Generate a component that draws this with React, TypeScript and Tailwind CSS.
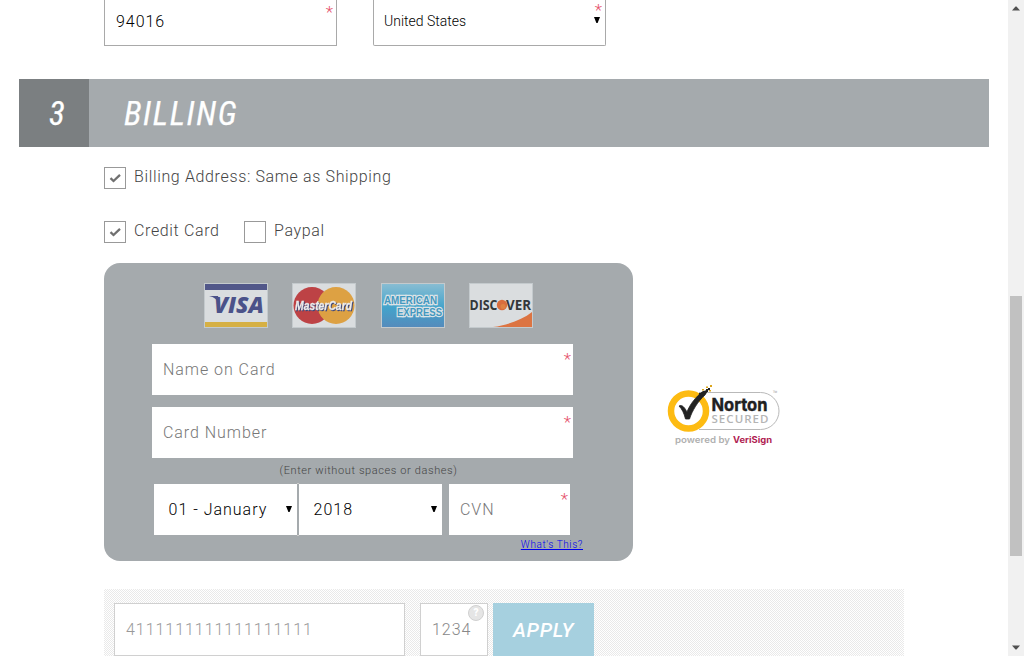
import type { ReactNode } from 'react';

function Star({ className }: { className: string }) {
  return <span className={`absolute text-[17px] leading-none font-light text-[#e5506a] ${className}`}>*</span>;
}

function Caret() {
  return (
    <svg width="6" height="6" viewBox="0 0 6 6" className="mb-[2px] shrink-0">
      <path d="M0 0H6L3.6 6H2.4Z" fill="#000" />
    </svg>
  );
}

function Check({ label, checked, className }: { label: string; checked?: boolean; className?: string }) {
  return (
    <label className={`flex items-start gap-2 ${className ?? ''}`}>
      <span className="flex size-[22px] items-center justify-center border border-[#999] bg-white">
        {checked && (
          <svg width="12" height="10" viewBox="0 0 12 10">
            <path d="M1.500 5.200L4.500 8L11 1.800" fill="none" stroke="#707070" strokeWidth="2.3" />
          </svg>
        )}
      </span>
      <span className="text-base leading-[19px] tracking-[0.64px] whitespace-nowrap text-[#444]">{label}</span>
    </label>
  );
}

function CardFrame({ children }: { children: ReactNode }) {
  return (
    <svg width="64" height="45" viewBox="0 0 64 45" fontFamily="Open Sans, sans-serif">
      <rect width="64" height="45" fill="#dadddf" />
      {children}
      <rect x="0.5" y="0.5" width="63" height="44" fill="none" stroke="#c4cacd" />
    </svg>
  );
}

function Cards() {
  return (
    <div className="ml-[100px] grid grid-cols-[88px_89px_88px_64px]">
      <CardFrame>
        <rect x="1" y="1" width="62" height="6" fill="#515789" />
        <rect x="1" y="39" width="62" height="5" fill="#d6b044" />
        <text x="10" y="29.5" fontSize="23" fontWeight="800" fontStyle="italic" fill="#4b5289" textLength="50" lengthAdjust="spacingAndGlyphs">VISA</text>
        <path d="M5 13H14L16 21C14 17 10 14 5 13Z" fill="#4b5289" />
      </CardFrame>
      <CardFrame>
        <circle cx="20" cy="22.5" r="18.5" fill="#bd4245" />
        <circle cx="44" cy="22.5" r="18.5" fill="#dda143" />
        <path d="M31 11.5H35M29 14.5H37M28 17.5H38" stroke="#dda143" strokeWidth="1.3" />
        <path d="M27 29.500H37M29 32.500H37" stroke="#dda143" strokeWidth="1.3" />
        <text x="3" y="27" fontSize="12.500" fontWeight="700" fontStyle="italic" fontFamily="Liberation Sans, sans-serif" fill="#ececec" stroke="#ececec" strokeWidth="0.3" textLength="57" lengthAdjust="spacingAndGlyphs" className="drop-shadow-[1px_1px_0_#404878]">MasterCard</text>
      </CardFrame>
      <CardFrame>
        <defs>
          <linearGradient id="amex" x1="0" y1="0" x2="0" y2="1">
            <stop offset="0" stopColor="#8bbed3" />
            <stop offset="0.55" stopColor="#43a3cb" />
            <stop offset="1" stopColor="#568abb" />
          </linearGradient>
        </defs>
        <rect width="64" height="45" fill="url(#amex)" />
        <g fontSize="10.500" fontWeight="700" fontFamily="Liberation Sans, sans-serif" fill="#4398bf" stroke="#dce3e6" strokeWidth="2.4" paintOrder="stroke">
          <text x="3" y="21" textLength="53" lengthAdjust="spacingAndGlyphs">AMERICAN</text>
          <text x="16" y="32.500" textLength="45" lengthAdjust="spacingAndGlyphs">EXPRESS</text>
        </g>
      </CardFrame>
      <CardFrame>
        <path d="M24 44C38 42 53 37 63 29V44Z" fill="#dc7442" />
        <g fontSize="13.5" fontWeight="700" fill="#34383a">
          <text x="0.5" y="27" textLength="28" lengthAdjust="spacingAndGlyphs">DISC</text>
          <text x="37" y="27" textLength="25" lengthAdjust="spacingAndGlyphs">VER</text>
        </g>
        <circle cx="33" cy="22" r="5.2" fill="#d96d3d" />
        <circle cx="34" cy="23.5" r="2.5" fill="#e39147" opacity="0.6" />
      </CardFrame>
    </div>
  );
}

function Norton() {
  return (
    <svg width="114" height="64" viewBox="0 0 114 64" className="mt-[120px] ml-[34px] shrink-0" fontFamily="Open Sans, sans-serif">
      <path d="M32 9.500H93.500A18.500 18.500 0 0 1 93.500 46.500H32" fill="#fff" stroke="#b9b9b9" />
      <circle cx="21.500" cy="28" r="17.500" fill="#fff" stroke="#fdbb12" strokeWidth="6.500" />
      <path d="M12 23C15 21 18 25 20 29C23 21 29 14 35 9L41 7L38 12C31 18 25 28 22.500 36H18.500C17 30 15 26 12 23Z" fill="#222" stroke="#222" strokeWidth="0.8" />
      <path d="M36 8h3v-2h2v3h-2v2h-2v2h-2zM41 5h2v2h-2zM32 10h2v2h-2z" fill="#222" />
      <path d="M39 3.500h2v1.500h-2zM43 2h2v2h-2zM42 7h2v1.500h-2zM35 6h2v1.500h-2z" fill="#dca51b" />
      <text x="44.500" y="27.500" fontSize="18" fontWeight="700" fontFamily="Inter, sans-serif" fill="#202020" stroke="#202020" strokeWidth="0.4" textLength="56" lengthAdjust="spacingAndGlyphs">Norton</text>
      <text x="44.500" y="40" fontSize="11.500" fontWeight="600" fill="#b4b4b4" textLength="57" lengthAdjust="spacing">SECURED</text>
      <text x="106" y="12" fontSize="6" fill="#888">™</text>
      <g fontSize="9" fontWeight="600" fontFamily="Inter, sans-serif">
        <text x="8" y="60" fill="#b0b0b0" textLength="55" lengthAdjust="spacingAndGlyphs">powered by</text>
        <text x="66" y="60" fontWeight="700" fill="#b01c52" textLength="39" lengthAdjust="spacingAndGlyphs">VeriSign</text>
      </g>
    </svg>
  );
}

function Field({ label, className }: { label: string; className: string }) {
  return (
    <div className={`relative h-[51px] bg-white pl-[11px] leading-[51px] tracking-[0.95px] text-[#777] ${className}`}>
      {label}
      <Star className="top-[7px] right-[1px]" />
    </div>
  );
}

function Select({ value }: { value: string }) {
  return (
    <div className="flex h-[51px] w-[143px] items-center justify-between bg-white pr-[5px] pl-[14.5px] tracking-[1px] text-black">
      {value}
      <Caret />
    </div>
  );
}

export default function App() {
  return (
    <div className="flex h-[656px] w-[1024px] overflow-hidden bg-white font-[Roboto,sans-serif] text-base font-light text-black">
      <main className="flex h-[656px] w-[1008px] flex-col overflow-hidden">
        <div className="ml-[104px] flex h-[46px] shrink-0 gap-9">
          <div className="relative w-[233px] border-x border-b border-[#a9a9a9] pl-[11px] leading-[43px] tracking-[0.95px]">
            94016
            <Star className="top-[4px] right-[2px]" />
          </div>
          <div className="relative flex w-[233px] items-center justify-between rounded-b-[2px] border-x border-b border-[#a9a9a9] pr-[5px] pb-[3px] pl-[10px] text-sm">
            United States
            <Caret />
            <Star className="top-[2px] right-[3px]" />
          </div>
        </div>

        <header className="mt-[33px] ml-[19px] flex h-[68px] w-[970px] shrink-0 bg-[#a5aaad] font-['Roboto_Condensed',Roboto,sans-serif] text-[33px] leading-[69px] font-normal text-white italic [-webkit-text-stroke:0.25px_white]">
          <div className="w-[70px] bg-[#7b7f81] pl-[30px]">3</div>
          <h2 className="pl-[35px] tracking-[1.65px]">BILLING</h2>
        </header>

        <div className="mt-5 ml-[104px] flex shrink-0">
          <Check label="Billing Address: Same as Shipping" checked />
        </div>
        <div className="mt-8 ml-[104px] flex shrink-0">
          <Check label="Credit Card" checked className="w-[140px]" />
          <Check label="Paypal" />
        </div>

        <div className="mt-5 ml-[104px] flex shrink-0">
          <section className="h-[298px] w-[529px] rounded-2xl bg-[#a5aaad] pt-5">
            <Cards />
            <div className="mt-4 ml-12 flex flex-col gap-3">
              <Field label="Name on Card" className="w-[421px]" />
              <Field label="Card Number" className="w-[421px]" />
            </div>
            <p className="h-[26px] text-center text-[11px] leading-[25px] tracking-[0.61px] text-[#444]">(Enter without spaces or dashes)</p>
            <div className="ml-[50px] flex">
              <Select value="01 - January" />
              <div className="my-[-1px] w-[2px] border-y border-[#ccc]" />
              <Select value="2018" />
              <Field label="CVN" className="ml-[7px] w-[121px]" />
            </div>
            <div className="mr-[50px] text-right text-[10px] leading-[19px] tracking-[0.6px] text-[#0000ee] underline">What's This?</div>
          </section>
          <Norton />
        </div>

        <div className="mt-7 ml-[104px] flex h-[67px] w-[800px] shrink-0 bg-[repeating-conic-gradient(#e9e9e9_0_25%,#ffffff_0_50%)] bg-[length:2px_2px] pt-[14px] pl-[10px]">
          <div className="h-[53px] w-[291px] border border-[#d0d0d0] bg-white pl-[11px] leading-[51px] tracking-[0.96px] text-[#999]">4111111111111111111</div>
          <div className="relative ml-[15px] h-[53px] w-[68px] border border-[#d0d0d0] bg-white pl-[11px] leading-[51px] tracking-[0.96px] text-[#888]">
            1234
            <span className="absolute top-px right-[3px] flex size-4 items-center justify-center rounded-full border border-[#d0d0d0] bg-[#e5e5e5] text-[10px] leading-none font-black tracking-normal text-white">?</span>
          </div>
          <div className="ml-[5px] h-[53px] w-[101px] bg-[#a6d0df] text-center text-xl leading-[54px] font-medium tracking-[0.7px] text-white italic">APPLY</div>
        </div>
      </main>

      <aside className="flex h-[656px] w-4 flex-col items-center bg-[#f1f1f1] py-[5px]">
        <svg width="8" height="5" viewBox="0 0 8 5" className="mt-px"><path d="M0 4.500L3.500 0.500H4.500L8 4.500Z" fill="#505050" /></svg>
        <div className="mt-[285px] h-[260px] w-3 bg-[#c1c1c1]" />
        <svg width="8" height="5" viewBox="0 0 8 5" className="mt-auto mb-px"><path d="M0 0.500L3.500 4.500H4.500L8 0.500Z" fill="#505050" /></svg>
      </aside>
    </div>
  );
}
